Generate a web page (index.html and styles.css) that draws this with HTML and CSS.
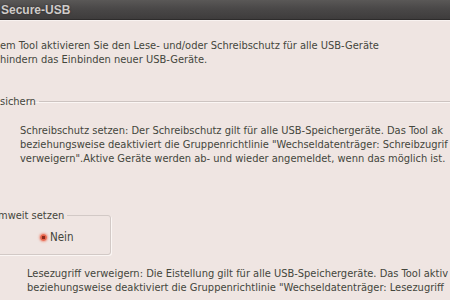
FILE: index.html
```html
<!DOCTYPE html>
<html lang="de">
<head>
    <meta charset="UTF-8">
    <meta name="viewport" content="width=device-width, initial-scale=1.0">
    <title>Secure-USB</title>
    <link rel="stylesheet" href="styles.css">
</head>
<body>
    <div class="window">
        <div class="title-bar">
            <span class="title">Secure-USB</span>
        </div>
        <div class="content">
            <p class="intro">em Tool aktivieren Sie den Lese- und/oder Schreibschutz für alle USB-Geräte<br>hindern das Einbinden neuer USB-Geräte.</p>

            <fieldset class="group">
                <legend>sichern</legend>
                <p class="info info-write">Schreibschutz setzen: Der Schreibschutz gilt für alle USB-Speichergeräte. Das Tool ak<br>beziehungsweise deaktiviert die Gruppenrichtlinie "Wechseldatenträger: Schreibzugrif<br>verweigern".Aktive Geräte werden ab- und wieder angemeldet, wenn das möglich ist.</p>
            </fieldset>

            <fieldset class="option-box">
                <legend>mweit setzen</legend>
                <label class="radio">
                    <span class="radio-dot"></span>
                    Nein
                </label>
            </fieldset>

            <p class="info info-read">Lesezugriff verweigern: Die Eistellung gilt für alle USB-Speichergeräte. Das Tool aktiv<br>beziehungsweise deaktiviert die Gruppenrichtlinie "Wechseldatenträger: Lesezugriff</p>
        </div>
    </div>
</body>
</html>
```

FILE: styles.css
```css
html, body {
    margin: 0;
    padding: 0;
    overflow: hidden;
}
body {
    font-family: Tahoma, "DejaVu Sans Condensed", "Liberation Sans", sans-serif;
    font-size: 11px;
    color: #44463c;
    background-color: #efe5e2;
}
.window {
    width: 450px;
    height: 300px;
    overflow: hidden;
}
.title-bar {
    height: 19px;
    display: flex;
    align-items: center;
    background: linear-gradient(to bottom, #5a5857 0%, #4a4848 45%, #3e3c3c 100%);
    border-bottom: 1px solid #2e2c2c;
    box-shadow: 0 1px 0 #f8f2f0;
}
.title {
    margin-left: 1px;
    font-family: "Liberation Sans", sans-serif;
    font-size: 12px;
    font-weight: bold;
    color: #cfcbc9;
    text-shadow: 0 0 2px #2c2a2a;
}
.content {
    padding-top: 19px;
}
.intro {
    margin: 0;
    line-height: 14px;
    white-space: nowrap;
}
.group {
    margin: 28px 0 0 0;
    padding: 0;
    border: none;
    border-top: 1px solid #cdc4c1;
    box-shadow: inset 0 1px 0 #fbf6f4;
    min-width: 0;
}
.group legend {
    padding: 0 3px 0 0;
    margin-left: 0;
}
.info {
    margin: 0;
    line-height: 14px;
    white-space: nowrap;
}
.info-write {
    margin-top: 16px;
    padding-left: 20px;
}
.option-box {
    margin: 43px 0 0 -6px;
    padding: 8px 0 16px 0;
    width: 115px;
    height: 20px;
    border: 1px solid #d2c9c6;
    border-radius: 3px;
    box-shadow: 1px 1px 0 #fbf6f4;
}
.option-box legend {
    padding: 0 3px 0 0;
    margin-left: 3px;
}
.radio {
    display: flex;
    align-items: center;
    gap: 3px;
    padding-left: 45px;
    font-size: 11.5px;
}
.radio-dot {
    width: 7px;
    height: 7px;
    border-radius: 50%;
    background: radial-gradient(circle, #8a2a1c 0 1.5px, #e6624a 2px, #f08a72 100%);
    box-shadow: 0 0 2px 1px rgba(236, 120, 96, 0.6);
}
.info-read {
    margin-top: 12px;
    padding-left: 27px;
}
```
